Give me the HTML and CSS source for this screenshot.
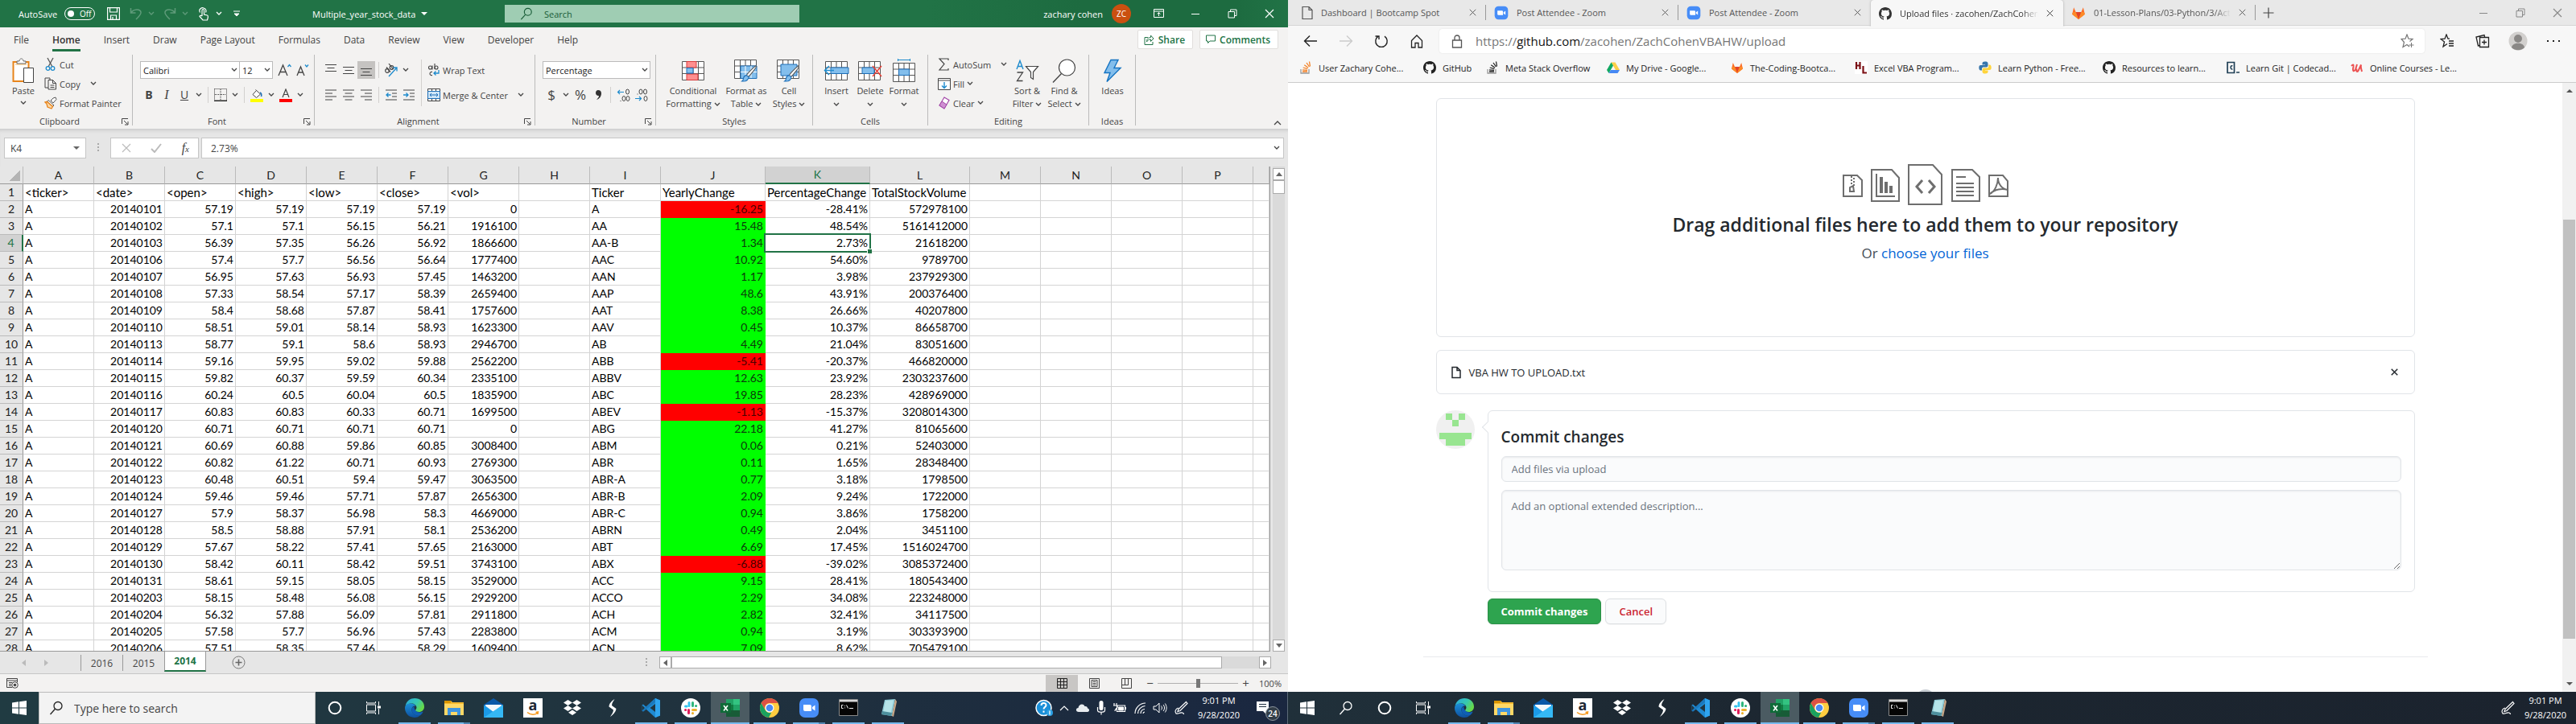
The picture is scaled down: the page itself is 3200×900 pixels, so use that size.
FILE: index.html
```html
<!DOCTYPE html>
<html lang="en">
<head>
<meta charset="utf-8">
<title>Multiple_year_stock_data</title>
<link rel="stylesheet" href="styles.css">
</head>
<body>
<svg class="sprite" aria-hidden="true">
  <symbol id="chev" viewBox="0 0 8 6"><path d="M1 1l3 3 3-3" fill="none" stroke="currentColor" stroke-width="1.3"/></symbol>
  <symbol id="search" viewBox="0 0 18 18"><circle cx="11" cy="6.5" r="5" fill="none" stroke="currentColor" stroke-width="1.3"/><path d="M7.5 10.3L1.5 17" fill="none" stroke="currentColor" stroke-width="1.3"/></symbol>
  <symbol id="close" viewBox="0 0 12 12"><path d="M1 1l10 10M11 1L1 11" fill="none" stroke="currentColor" stroke-width="1.2"/></symbol>
  <symbol id="restore" viewBox="0 0 12 12"><path d="M1 3.5h7.5V11H1zM3.5 3.500V1H11v7.500H8.500" fill="none" stroke="currentColor"/></symbol>
  <symbol id="minimize" viewBox="0 0 12 12"><path d="M1 6.500h10" stroke="currentColor"/></symbol>
  <symbol id="launcher" viewBox="0 0 9 9"><path d="M.5 7V.5H8M3 3l4.500 4.500M8 4v4H4" fill="none" stroke="currentColor"/></symbol>

  <symbol id="al-left" viewBox="0 0 14 14"><path d="M0 1h14M0 5h9M0 9h14M0 13h9" stroke="#444"/></symbol>
  <symbol id="al-center" viewBox="0 0 14 14"><path d="M0 1h14M2.500 5h9M0 9h14M2.500 13h9" stroke="#444"/></symbol>
  <symbol id="al-right" viewBox="0 0 14 14"><path d="M0 1h14M5 5h9M0 9h14M5 13h9" stroke="#444"/></symbol>
  <symbol id="al-top" viewBox="0 0 14 14"><path d="M0 .5h14M2.500 4.500h9M0 8.500h14" stroke="#444"/></symbol>
  <symbol id="al-mid" viewBox="0 0 14 14"><path d="M0 3.500h14M2.500 7.500h9M0 11.500h14" stroke="#444"/></symbol>
  <symbol id="al-bot" viewBox="0 0 14 14"><path d="M0 5.500h14M2.500 9.500h9M0 13.500h14" stroke="#444"/></symbol>
  <symbol id="grid-base" viewBox="0 0 28 24"><path d="M.5 .5h27v23H.5zM.5 8h27M.5 15.500h27M7.500.5v23M14 .5v23M20.500.5v23" fill="#fff" stroke="#555"/></symbol>
  <symbol id="brush" viewBox="0 0 20 20"><path d="M18.500 1c1 1-8 12-9.500 12.500L7 12C8 10 17.500 0 18.500 1z" fill="#fff" stroke="#555"/><path d="M7 12l2.500 2c-.5 4-4 5.500-8 5 2-1 1.500-2 2-4s2-3 3.500-3z" fill="#83beec" stroke="#1e6fb8"/></symbol>

  <symbol id="t-start" viewBox="0 0 20 20"><path d="M1 3.500l8-1.200v7.200H1zM10 2.200L19 1v8.500h-9zM1 10.500h8v7.200l-8-1.200zM10 10.500h9V19l-9-1.200z" fill="#fff"/></symbol>
  <symbol id="t-cortana" viewBox="0 0 20 20"><circle cx="10" cy="10" r="7.300" fill="none" stroke="#fff" stroke-width="2"/></symbol>
  <symbol id="t-view" viewBox="0 0 20 20"><path d="M1.500 6h11v8h-11zM1.500 2v2h11V2M1.500 18v-2h11v2M16.500 2v5M16.500 11v7" fill="none" stroke="#fff"/><path d="M15 7.500h4v3h-4z" fill="#fff"/></symbol>
  <symbol id="t-edge" viewBox="0 0 26 26"><defs><linearGradient id="ge1" x1="0" y1="0" x2="1" y2=".5"><stop offset="0" stop-color="#2aa8e0"/><stop offset=".6" stop-color="#36c8b0"/><stop offset="1" stop-color="#66d94a"/></linearGradient><linearGradient id="ge2" x1="0" y1="0" x2="0" y2="1"><stop offset="0" stop-color="#1c8fd8"/><stop offset="1" stop-color="#0d50a0"/></linearGradient></defs><path d="M1.500 11C2.500 5 7 1 13.200 1 20 1 25 5.500 25 11.500c0 4-3 6.500-6.500 6.500-2.500 0-4.500-1-4.500-2 0-.7 1.500-1.500 1.500-3.500 0-3-3-5-6.500-5-3.500 0-6.500 1.500-7.500 3.500z" fill="url(#ge1)"/><path d="M1 13c0-4 4-6 8-5.500 2.500.3 5 1.500 6 3.500-3-1.500-6 1-5.500 5 .6 4.500 5 7.500 10 6.500-2 1.800-4 2.500-6.500 2.500C6 25 1 19.500 1 13z" fill="url(#ge2)"/><path d="M9.500 16c-.2-2.500 1-4.500 3-5 -.5 4 3 8 8 7.500 1.200-.1 2.300-.6 3.200-1-1 2.500-2.500 4-4.200 5-5 1-9.500-2-10-6.500z" fill="#0f5fb5"/></symbol>
  <symbol id="t-explorer" viewBox="0 0 26 26"><path d="M1 4h8l2 2h14v16H1z" fill="#f5b92e"/><path d="M1 8h24v14H1z" fill="#ffd866"/><path d="M1 4h8v3H1z" fill="#d99500"/><path d="M5 13h16v9h-4v-4H9v4H5z" fill="#3f95e0"/></symbol>
  <symbol id="t-mail" viewBox="0 0 26 26"><path d="M1 9l12-8 12 8v4H1z" fill="#0a58a8"/><path d="M3 9h20v10H3z" fill="#f4f8fc"/><path d="M1 9l12 9 12-9v16H1z" fill="#1b9ae8"/><path d="M1 25l24-16v16z" fill="#35b8f5"/></symbol>
  <symbol id="t-amazon" viewBox="0 0 26 26"><path d="M1 1h24v24H1z" fill="#fff"/><path d="M6 18.500c4 3.500 10 3.500 13 .5M16.500 18.500l3-.5-.5 3" fill="none" stroke="#f79a1e" stroke-width="1.500"/></symbol>
  <symbol id="t-dropbox" viewBox="0 0 26 26"><path d="M7.500 3l5.500 3.500-5.500 3.500L2 6.500zM18.500 3L24 6.500 18.500 10 13 6.500zM7.500 10l5.500 3.500L7.500 17 2 13.500zM18.500 10l5.500 3.500-5.500 3.500-5.500-3.500zM13 15.500l5 3.200-5 3.300-5-3.300z" fill="#fff"/></symbol>
  <symbol id="t-bolt" viewBox="0 0 26 26"><path d="M16.500 2c-4 2.500-7 6-7 9.500l5.500 4c0 3-2.500 6-4 8.500 3.500-2.500 7-6 7.500-10l-5.500-4C13 7 15 4.500 16.500 2z" fill="#fff"/></symbol>
  <symbol id="t-code" viewBox="0 0 26 26"><path d="M18 1l6 2.500v19L18 25 6.500 14.500 3 17.500 1.500 16.500v-7L3 8.500l3.500 3z" fill="#1f8ad2"/><path d="M18 1L1.500 16.500 3 17.500 18 6z" fill="#1a78bd"/><path d="M18 1l6 2.500v19L18 25z" fill="#2fa4ef"/><path d="M18 8v10l-6.500-5z" fill="#213540"/><path d="M1.500 9.500v7L5 13z" fill="#213540"/></symbol>
  <symbol id="t-slack" viewBox="0 0 26 26"><circle cx="13" cy="13" r="12" fill="#fff"/><g stroke-width="3" stroke-linecap="round"><path d="M11 6.500v4M6.500 11H8" stroke="#36c5f0"/><path d="M15.500 6.500v4M19.500 10.500h.2" stroke="#2eb67d"/><path d="M15.500 15.500h4M15.500 19.500v.2" stroke="#ecb22e"/><path d="M10.500 15.500v4M6.500 15.500h.2" stroke="#e01e5a"/></g></symbol>
  <symbol id="t-excel" viewBox="0 0 26 26"><path d="M8 2h17v22H8z" fill="#21a366"/><path d="M17 2h8v7h-8z" fill="#33c481"/><path d="M8 9h9v7H8z" fill="#107c41"/><path d="M8 16h17v8H8z" fill="#185c37"/><path d="M1 7h13v12H1z" fill="#0f6b38"/><path d="M5 10l5 6.500M10 10l-5 6.500" stroke="#fff" stroke-width="1.600"/></symbol>
  <symbol id="t-chrome" viewBox="0 0 26 26"><circle cx="13" cy="13" r="12" fill="#ffcd40"/><path d="M2.600 7A12 12 0 0 1 23.400 7H13a6 6 0 0 0-5.200 9z" fill="#dd5144"/><path d="M2.600 7l5.200 9a6 6 0 0 0 7.500 2.500L12 25A12 12 0 0 1 2.600 7z" fill="#1aa15f"/><circle cx="13" cy="13" r="5.500" fill="#fff"/><circle cx="13" cy="13" r="4.300" fill="#4a8af4"/></symbol>
  <symbol id="t-zoom" viewBox="0 0 26 26"><rect x="1" y="1" width="24" height="24" rx="7" fill="#478df7"/><path d="M6 9h8a2 2 0 0 1 2 2v6H8a2 2 0 0 1-2-2zM17 12l3.500-2.500v7L17 14z" fill="#fff"/></symbol>
  <symbol id="t-cmd" viewBox="0 0 26 26"><path d="M1.500 2.500h23v20h-23z" fill="#050505" stroke="#8a8a8a"/><path d="M2 3h22v2.500H2z" fill="#d8d8d8"/><path d="M6.500 9.500h-2v4h2M8.500 10v.8M8.500 12.500v.8M10.500 9.500l2 4M14 13.500h5" stroke="#eee" fill="none"/></symbol>
  <symbol id="t-note" viewBox="0 0 26 26"><path d="M9 3l13-1-4 21-13-2z" fill="#8ecbd6"/><path d="M10 4l10-.8-3.500 17L7 19z" fill="#b5e3e8"/><path d="M22 2l2 3-4 19-2-1z" fill="#c9a888"/><path d="M6 17l12 2-.8 4L5 21z" fill="#4d8f9d"/></symbol>
  <symbol id="pen" viewBox="0 0 18 18"><path d="M15.500 1.500l1.500 2-9 9-3 1 1-3zM6 9C2 10 1 14 3 16c3 1 5-2 8-1 1 .3 1 1.500 2 1.500" fill="none" stroke="#fff" stroke-width="1.200"/></symbol>

  <symbol id="octocat" viewBox="0 0 16 16"><path fill="currentColor" d="M8 0C3.580 0 0 3.580 0 8c0 3.540 2.290 6.530 5.470 7.590.4.070.55-.17.55-.38 0-.19-.01-.82-.01-1.490-2.010.37-2.530-.49-2.690-.94-.09-.23-.48-.94-.82-1.130-.28-.15-.68-.52-.01-.53.63-.01 1.080.58 1.230.82.72 1.210 1.870.87 2.330.66.07-.52.28-.87.51-1.070-1.780-.2-3.640-.89-3.640-3.950 0-.87.31-1.590.82-2.150-.08-.2-.36-1.020.08-2.120 0 0 .67-.21 2.200.82.64-.18 1.320-.27 2-.27s1.360.09 2 .27c1.530-1.040 2.200-.82 2.200-.82.44 1.100.16 1.920.08 2.120.51.56.82 1.270.82 2.150 0 3.070-1.870 3.750-3.650 3.950.29.25.54.73.54 1.480 0 1.070-.01 1.930-.01 2.200 0 .21.15.46.55.38A8.010 8.010 0 0 0 16 8c0-4.420-3.580-8-8-8z"/></symbol>
  <symbol id="stack" viewBox="0 0 16 16"><path d="M2 10v5h10v-5" fill="none" stroke="#999" stroke-width="1.300"/><path d="M4 13h6M4 10.800l6 .6M4.700 8l5.600 1.700M6.300 4.800l4.800 3.500M9 2l3.500 5M12.500.5l1 6" stroke="currentColor" stroke-width="1.300"/></symbol>
  <symbol id="gitlab" viewBox="0 0 16 16"><path d="M8 15L1 9.500 2.800 2l2.200 5h6l2.200-5L15 9.500z" fill="#fc6d26"/><path d="M8 15L5 7h6z" fill="#e24329"/><path d="M8 15L1 9.500 2 7h3zM8 15l7-5.500L14 7h-3z" fill="#fc8a26"/></symbol>
  <symbol id="drive" viewBox="0 0 16 16"><path d="M5.500 1.500h5L16 11h-5z" fill="#ffcf48"/><path d="M5.500 1.500L0 11l2.500 4L8 5.500z" fill="#11a861"/><path d="M5 11h11l-2.500 4h-11z" fill="#4688f4"/></symbol>
  <symbol id="python" viewBox="0 0 16 16"><path d="M8 .5c-3 0-3.500 1-3.500 2.500v1.500H8V5H2.500C1 5 .3 6.300.3 8s.7 3.500 2.200 3.500H4V9.500C4 8 5 7.500 6.500 7.500h3C11 7.500 11.500 6.500 11.500 5V3C11.500 1 10 .5 8 .5z" fill="#3776ab"/><path d="M8 15.500c3 0 3.500-1 3.500-2.500v-1.500H8V11h5.500c1.500 0 2.200-1.300 2.200-3s-.7-3.500-2.200-3.500H12.300V6.500c0 1.500-.8 2-2.300 2H6.500C5 8.500 4.500 9.500 4.500 11v2c0 2 1.500 2.500 3.500 2.500z" fill="#ffd43b"/></symbol>
  <symbol id="page" viewBox="0 0 14 18"><path d="M1 1.500h8l4 4v11H1zM9 1.500v4h4" fill="none" stroke="currentColor" stroke-width="1.200"/></symbol>
  <symbol id="star" viewBox="0 0 18 18"><path d="M11 16l-3-2.500-5 3 1.500-6L1 6.500l5-.3L8 1l2 5.200 5 .3-3.500 3" fill="none" stroke="currentColor" stroke-width="1.200"/></symbol>
</svg>

<main class="desktop">
  <section class="monitor" aria-label="Spreadsheet monitor">
    <header class="xl-title">
      <div class="xl-quick">
        <span class="autosave">AutoSave</span>
        <button class="toggle" aria-label="AutoSave off"><i></i>Off</button>
        <button class="qbtn" aria-label="Save"><svg width="16" height="16" viewBox="0 0 16 16"><path d="M.6.600h14.800v14.800H.6zM3.500.600V6h9V.6M4.500 15.400V10h7v5.400M7 15.400V12" fill="none" stroke="#fff" stroke-width="1.200"/></svg></button>
        <button class="qbtn faded" aria-label="Undo"><svg width="16" height="16" viewBox="0 0 16 16"><path d="M1.500 1v6h6M1.500 7C5 2 13 1.500 14 6c.7 3-3 6-6 9" fill="none" stroke="currentColor" stroke-width="1.500"/></svg></button><svg class="chev faded"><use href="#chev"/></svg>
        <button class="qbtn faded" aria-label="Redo"><svg width="16" height="16" viewBox="0 0 16 16"><path d="M14.500 1v6h-6M14.500 7C11 2 3 1.500 2 6c-.7 3 3 6 6 9" fill="none" stroke="currentColor" stroke-width="1.500"/></svg></button><svg class="chev faded"><use href="#chev"/></svg>
        <button class="qbtn" aria-label="Touch mode"><svg width="14" height="17" viewBox="0 0 14 17"><path d="M5 11V4c0-2 2.500-2 2.500 0v5l4 1c1 .3 1 1.500.8 3L11.500 16H6L2 11.500c0-1.500 2-1.500 3-.5M2.500 6.500C0 2 5 0 7 1c3 1 3.500 3.500 2.500 5.500" fill="none" stroke="#fff" stroke-width="1.200"/></svg></button><svg class="chev"><use href="#chev"/></svg>
        <svg class="qat" viewBox="0 0 8 8"><path d="M0 1h8M1 4l3 3 3-3z" stroke="#fff" fill="#fff"/></svg>
      </div>
      <h1 class="xl-name">Multiple_year_stock_data <i class="tri"></i></h1>
      <label class="xl-search"><svg width="16" height="16"><use href="#search"/></svg><input type="text" placeholder="Search" aria-label="Search"></label>
      <div class="xl-user">
        <span>zachary cohen</span><b class="avatar">ZC</b>
        <button class="win" aria-label="Ribbon options"><svg width="13" height="12" viewBox="0 0 13 12"><path d="M.5.500h12v10H.5zM.5 3h12M6.500 9V5M4.500 6.500l2-2 2 2" fill="none" stroke="#fff"/></svg></button>
        <button class="win" aria-label="Minimize"><svg width="12" height="12"><use href="#minimize"/></svg></button>
        <button class="win" aria-label="Restore"><svg width="12" height="12"><use href="#restore"/></svg></button>
        <button class="win" aria-label="Close"><svg width="12" height="12"><use href="#close"/></svg></button>
      </div>
    </header>

    <nav class="xl-tabs">
      <a href="#file">File</a><a href="#home" class="on">Home</a><a href="#insert">Insert</a><a href="#draw">Draw</a><a href="#layout">Page Layout</a><a href="#formulas">Formulas</a><a href="#data">Data</a><a href="#review">Review</a><a href="#view">View</a><a href="#developer">Developer</a><a href="#help">Help</a>
      <div class="xl-share">
        <button><svg width="13" height="13" viewBox="0 0 13 13"><path d="M5 3.500H1v9h10V9M3.500 9c0-4 2-5.500 5-5.500V1L12 5 8.500 8.500V6c-2.500 0-4 1-5 3z" fill="none" stroke="#217346"/></svg>Share</button>
        <button><svg width="12" height="12" viewBox="0 0 12 12"><path d="M.5 1h11v7H5l-2.500 2.500V8h-2z" fill="none" stroke="#217346"/></svg>Comments</button>
      </div>
    </nav>

    <div class="ribbon">
      <section class="group g-clip">
        <div class="body">
          <button class="big paste"><svg width="28" height="32" viewBox="0 0 28 32"><path d="M1.500 5h19v24h-19z" fill="#fff" stroke="#e8841a" stroke-width="2"/><path d="M4 8h14" stroke="#fbd9a8" stroke-width="2"/><path d="M6 7V4h3c0-4 5-4 5 0h3v3z" fill="#fff" stroke="#666"/><path d="M14.500 12.500h12v18h-12z" fill="#fff" stroke="#444"/></svg><span>Paste</span><svg class="chev"><use href="#chev"/></svg></button>
          <div class="stack">
            <button class="line"><svg width="16" height="18" viewBox="0 0 16 18"><path d="M4 1l6 11M11 1L5 12" stroke="#555" stroke-width="1.300"/><circle cx="4.500" cy="14" r="2.300" fill="none" stroke="#1e8bcd" stroke-width="1.300"/><circle cx="10.500" cy="14" r="2.300" fill="none" stroke="#1e8bcd" stroke-width="1.300"/></svg>Cut</button>
            <button class="line"><svg width="16" height="16" viewBox="0 0 16 16"><path d="M5 13H1V1h6v2M5 3.500h5.500l4 4V15H5zM10.500 3.500v4h4M7.500 10h5M7.500 12.500h5" fill="none" stroke="#444"/></svg>Copy<svg class="chev wide"><use href="#chev"/></svg></button>
            <button class="line"><svg width="16" height="16" viewBox="0 0 16 16"><path d="M11 2l3-1 1 2.500-4 4.500-3-3z" fill="#fff" stroke="#555"/><path d="M5 4.500L12 11l-2 1.500L3.500 6z" fill="#fff" stroke="#555"/><path d="M3.500 6.500L1 7l2 2 1 4 5 2 1.500-2.500z" fill="#fbd9a8" stroke="#e8841a" stroke-width="1.300"/></svg>Format Painter</button>
          </div>
        </div>
        <h2>Clipboard</h2><svg class="launch"><use href="#launcher"/></svg>
      </section>

      <section class="group g-font">
        <div class="rows">
          <div class="row">
            <select class="combo c-font" aria-label="Font"><option>Calibri</option></select><select class="combo c-size" aria-label="Font size"><option>12</option></select>
            <button class="ib tall" aria-label="Increase font size"><svg width="18" height="18" viewBox="0 0 18 18"><path d="M1 16L6.500 3 12 16M3 11.500h7" fill="none" stroke="#444" stroke-width="1.300"/><path d="M12.500 5l2-2.500 2 2.500" fill="none" stroke="#1e8bcd" stroke-width="1.300"/></svg></button><button class="ib tall" aria-label="Decrease font size"><svg width="18" height="18" viewBox="0 0 18 18"><path d="M2 16L6.500 5 11 16M3.500 12h6" fill="none" stroke="#444" stroke-width="1.300"/><path d="M12 2.500l2 2.500 2-2.500" fill="none" stroke="#1e8bcd" stroke-width="1.300"/></svg></button>
          </div>
          <div class="row">
            <button class="ib"><b>B</b></button><button class="ib"><em>I</em></button><button class="ib"><u>U</u></button><svg class="chev pad"><use href="#chev"/></svg><i class="sep"></i>
            <button class="ib" aria-label="Borders"><svg width="16" height="16" viewBox="0 0 16 16"><path d="M.5.500h15v14M.5.500v14M8 1v14M1 7.500h14" fill="none" stroke="#333" stroke-dasharray="1 1"/><path d="M0 15.300h16" stroke="#222" stroke-width="1.500"/></svg></button><svg class="chev pad"><use href="#chev"/></svg><i class="sep"></i>
            <button class="ib" aria-label="Fill color"><svg width="16" height="17" viewBox="0 0 16 17"><path d="M6.500 1.500l6 5.500-5 4.500L3 7.500l4.500-5" fill="#fff" stroke="#444"/><path d="M12 5c2 1 2 3 1.500 5" fill="none" stroke="#1e6fb8" stroke-width="1.600"/><path d="M0 13h16v4H0z" fill="#ff0"/></svg></button><svg class="chev pad"><use href="#chev"/></svg>
            <button class="ib" aria-label="Font color"><svg width="16" height="17" viewBox="0 0 16 17"><path d="M4 11L8 1l4 10M5.300 7.500h5.400" fill="none" stroke="#444" stroke-width="1.200"/><path d="M0 13h16v4H0z" fill="red"/></svg></button><svg class="chev pad"><use href="#chev"/></svg>
          </div>
        </div>
        <h2>Font</h2><svg class="launch"><use href="#launcher"/></svg>
      </section>

      <section class="group g-align">
        <div class="body">
          <div class="rows">
            <div class="row"><button class="ib" aria-label="Top align"><svg width="14" height="14"><use href="#al-top"/></svg></button><button class="ib" aria-label="Middle align"><svg width="14" height="14"><use href="#al-mid"/></svg></button><button class="ib tall sel" aria-label="Bottom align"><svg width="14" height="14"><use href="#al-bot"/></svg></button><i class="sep"></i><button class="ib" aria-label="Orientation"><svg width="18" height="17" viewBox="0 0 18 17"><g fill="none" stroke="#444" stroke-width="1.200"><circle cx="4" cy="9" r="2.300"/><path d="M3 4.500l5 6"/><circle cx="9.500" cy="5" r="2.300"/><path d="M6 0l5 6.500"/></g><path d="M6 16L16 5M11.500 5h4.500v4.500" fill="none" stroke="#1e8bcd" stroke-width="1.300"/></svg></button><svg class="chev pad"><use href="#chev"/></svg></div>
            <div class="row"><button class="ib" aria-label="Align left"><svg width="14" height="14"><use href="#al-left"/></svg></button><button class="ib" aria-label="Center"><svg width="14" height="14"><use href="#al-center"/></svg></button><button class="ib" aria-label="Align right"><svg width="14" height="14"><use href="#al-right"/></svg></button><i class="sep"></i><button class="ib" aria-label="Decrease indent"><svg width="14" height="14" viewBox="0 0 14 14"><path d="M0 1h14M8 5h6M8 9h6M0 13h14" stroke="#444"/><path d="M6.500 7H1M3.500 4.500L1 7l2.500 2.500" fill="none" stroke="#1e8bcd" stroke-width="1.300"/></svg></button><button class="ib" aria-label="Increase indent"><svg width="14" height="14" viewBox="0 0 14 14"><path d="M0 1h14M8 5h6M8 9h6M0 13h14" stroke="#444"/><path d="M0 7h5.500M3.500 4.500L6 7 3.500 9.500" fill="none" stroke="#1e8bcd" stroke-width="1.300"/></svg></button></div>
          </div>
          <i class="sep long"></i>
          <div class="rows">
            <button class="line row"><svg width="16" height="16" viewBox="0 0 16 16"><g fill="none" stroke="#444" stroke-width="1.100"><circle cx="3.500" cy="5" r="2"/><path d="M6 2.500v5M9 0v7"/><circle cx="11" cy="5" r="2"/><path d="M6 10.500c-4-1-4 5 0 4"/></g><path d="M14 8v4H8M10.500 9.500L8 12l2.500 2.500" fill="none" stroke="#1e8bcd" stroke-width="1.300"/></svg>Wrap Text</button>
            <button class="line row"><svg width="16" height="16" viewBox="0 0 16 16"><path d="M.5.500h15v15H.5zM5.500.500v3M10.500.500v3M5.500 12.500v3M10.500 12.500v3" fill="#fff" stroke="#444"/><path d="M.5 3.500h15v9H.5z" fill="#cfe6f7" stroke="#1e6fb8"/><path d="M3 8h10M5 6L3 8l2 2M11 6l2 2-2 2" fill="none" stroke="#1e6fb8"/></svg>Merge &amp; Center<svg class="chev wide"><use href="#chev"/></svg></button>
          </div>
        </div>
        <h2>Alignment</h2><svg class="launch"><use href="#launcher"/></svg>
      </section>

      <section class="group g-num">
        <div class="rows">
          <div class="row"><select class="combo c-num" aria-label="Number format"><option>Percentage</option></select></div>
          <div class="row"><button class="ib glyph">$</button><svg class="chev pad"><use href="#chev"/></svg><button class="ib glyph">%</button><button class="ib" aria-label="Comma style"><svg width="9" height="14" viewBox="0 0 9 14"><path d="M4 1c2.500 0 4 1.500 4 4 0 4-2.500 7-6 8 2-2 3-3.500 3-5C3 8.500 1 7 1 4.500 1 2.500 2.300 1 4 1z" fill="#333"/></svg></button><i class="sep"></i><button class="ib" aria-label="Increase decimal"><svg width="17" height="17" viewBox="0 0 17 17"><path d="M9 4.500H1.500M4 2L1.500 4.500 4 7" fill="none" stroke="#1e8bcd" stroke-width="1.200"/><g fill="none" stroke="#444"><ellipse cx="13.500" cy="4" rx="2" ry="3"/><ellipse cx="9" cy="12.500" rx="2" ry="3"/><ellipse cx="14" cy="12.500" rx="2" ry="3"/><path d="M4.500 15.500h1"/></g></svg></button><button class="ib" aria-label="Decrease decimal"><svg width="17" height="17" viewBox="0 0 17 17"><path d="M1 12.500h7.500M6 10l2.500 2.500L6 15" fill="none" stroke="#1e8bcd" stroke-width="1.200"/><g fill="none" stroke="#444"><ellipse cx="8" cy="4" rx="2" ry="3"/><ellipse cx="13.500" cy="4" rx="2" ry="3"/><ellipse cx="14" cy="12.500" rx="2" ry="3"/><path d="M3.500 7h1"/></g></svg></button></div>
        </div>
        <h2>Number</h2><svg class="launch"><use href="#launcher"/></svg>
      </section>

      <section class="group g-style">
        <div class="body">
          <button class="big w72"><svg width="28" height="24" viewBox="0 0 28 24"><use href="#grid-base"/><path d="M6 .5h12v7.500H6zM6 16h14v7.500H6z" fill="#ff8f8f" stroke="#d83b3b"/><path d="M6 8.500h8V15H6z" fill="#83beec" stroke="#1e6fb8"/></svg><span>Conditional<br>Formatting <svg class="chev"><use href="#chev"/></svg></span></button>
          <button class="big w60"><svg width="30" height="28" viewBox="0 0 30 28"><use href="#grid-base" width="28" height="24"/><path d="M8 8h20v15.500H8z" fill="#83beec" stroke="#1e6fb8"/><path d="M14 8v15M21 8v15M8 15.500h20" stroke="#fff"/><use href="#brush" x="8" y="7" width="21" height="21"/></svg><span>Format as<br>Table <svg class="chev"><use href="#chev"/></svg></span></button>
          <button class="big w46"><svg width="30" height="28" viewBox="0 0 30 28"><use href="#grid-base" width="28" height="24"/><path d="M5 6h20v14H5z" fill="#83beec" stroke="#1e6fb8"/><use href="#brush" x="8" y="7" width="21" height="21"/></svg><span>Cell<br>Styles <svg class="chev"><use href="#chev"/></svg></span></button>
        </div>
        <h2>Styles</h2>
      </section>

      <section class="group g-cells">
        <div class="body">
          <button class="big w42"><svg width="32" height="24" viewBox="0 0 32 24"><use href="#grid-base" x="2" width="28" height="24"/><path d="M9 8h22v7.500H9z" fill="#83beec" stroke="#1e6fb8"/><path d="M13 11.500H1.500M7 6l-5.500 5.500L7 17" fill="none" stroke="#1e8bcd" stroke-width="1.500"/></svg><span>Insert<br><svg class="chev"><use href="#chev"/></svg></span></button>
          <button class="big w42"><svg width="30" height="24" viewBox="0 0 30 24"><use href="#grid-base" width="28" height="24"/><path d="M5 8h15v7.500H5z" fill="#83beec" stroke="#1e6fb8"/><path d="M18 6l11 13M29 6L18 19" stroke="#e8453c" stroke-width="1.600"/></svg><span>Delete<br><svg class="chev"><use href="#chev"/></svg></span></button>
          <button class="big w42"><svg width="28" height="30" viewBox="0 0 28 30"><use href="#grid-base" y="5" width="28" height="24"/><path d="M7.500 13h13v7.500h-13z" fill="#83beec" stroke="#1e6fb8"/><path d="M6.500 1.500h15M6.500 0v3M21.500 0v3" stroke="#1e8bcd"/></svg><span>Format<br><svg class="chev"><use href="#chev"/></svg></span></button>
        </div>
        <h2>Cells</h2>
      </section>

      <section class="group g-edit">
        <div class="body">
          <div class="stack">
            <button class="line"><svg width="16" height="16" viewBox="0 0 16 16"><path d="M13 3V1H2l6 6.500L2 15h11v-2" fill="none" stroke="#444" stroke-width="1.200"/></svg>AutoSum<svg class="chev wide"><use href="#chev"/></svg></button>
            <button class="line"><svg width="16" height="15" viewBox="0 0 16 15"><path d="M.5.500h15v14H.5zM.5 3h15" fill="#fff" stroke="#444"/><path d="M8 5v7.500M5 9.500l3 3 3-3" fill="none" stroke="#1e8bcd" stroke-width="1.400"/></svg>Fill<svg class="chev"><use href="#chev"/></svg></button>
            <button class="line"><svg width="16" height="16" viewBox="0 0 16 16"><path d="M8 1l6 3.500-6 10.500-6-4z" fill="#fff" stroke="#a347a8" stroke-width="1.200"/><path d="M5 6l6 4-3 5-6-4z" fill="#cf8fd2" stroke="#a347a8"/></svg>Clear<svg class="chev"><use href="#chev"/></svg></button>
          </div>
          <button class="big w46"><svg width="30" height="28" viewBox="0 0 30 28"><path d="M2 12L6 1.500 10 12M3.500 8.500h5" fill="none" stroke="#1e8bcd" stroke-width="1.400"/><path d="M2.500 16h7l-7 10.500h7" fill="none" stroke="#444" stroke-width="1.300"/><path d="M13.500 8.500h15l-6 7v9l-3-2v-7z" fill="#fff" stroke="#444" stroke-width="1.200"/></svg><span>Sort &amp;<br>Filter <svg class="chev"><use href="#chev"/></svg></span></button>
          <button class="big w46"><svg width="30" height="30" viewBox="0 0 30 30"><circle cx="18.500" cy="11" r="10" fill="#fff" stroke="#444" stroke-width="1.200"/><path d="M11.500 18.500L1 29.500" stroke="#444" stroke-width="1.400"/></svg><span>Find &amp;<br>Select <svg class="chev"><use href="#chev"/></svg></span></button>
        </div>
        <h2>Editing</h2>
      </section>

      <section class="group g-ideas">
        <div class="body"><button class="big w46"><svg width="24" height="29" viewBox="0 0 24 29"><path d="M10 1h9l-5 10h8L5 28l4-11H2z" fill="#83beec" stroke="#1473c2" stroke-width="1.400"/></svg><span>Ideas</span></button></div>
        <h2>Ideas</h2>
      </section>
      <svg class="collapse" viewBox="0 0 10 7"><path d="M1 6l4-4 4 4" fill="none" stroke="#444" stroke-width="1.300"/></svg>
    </div>

    <div class="formula">
      <label class="namebox"><input type="text" value="K4" aria-label="Name box"><i class="tri"></i></label>
      <i class="dots"></i>
      <div class="fx"><svg width="12" height="12"><use href="#close"/></svg><svg width="14" height="12" viewBox="0 0 14 12"><path d="M1 7l4 4L13 1" fill="none" stroke="#bbb" stroke-width="2"/></svg><em>f<small>x</small></em></div>
      <label class="fbar"><input type="text" value="2.73%" aria-label="Formula bar"><svg class="chev"><use href="#chev"/></svg></label>
    </div>

    <div class="sheet">
      <div class="sheet-view">
        <table class="grid" id="grid">
          <colgroup><col class="c-head"><col span="9" class="c-std"><col span="2" class="c-wide"><col class="c-vol"><col span="4" class="c-std"><col></colgroup>
          <thead></thead><tbody></tbody>
        </table>
      </div>
      <div class="vscroll"><button class="up" aria-label="Scroll up"></button><i class="thumb"></i><button class="down" aria-label="Scroll down"></button></div>
    </div>

    <div class="sheet-tabs">
      <button class="arrow l" aria-label="Previous sheet"></button><button class="arrow r" aria-label="Next sheet"></button>
      <div class="tabset"><button>2016</button><button>2015</button><button class="on">2014</button></div>
      <button class="add" aria-label="New sheet"><svg width="17" height="17" viewBox="0 0 17 17"><circle cx="8.500" cy="8.500" r="7.500" fill="none" stroke="#777"/><path d="M8.500 4.500v8M4.500 8.500h8" stroke="#666" stroke-width="1.600"/></svg></button>
      <div class="hscroll"><i class="dots"></i><button class="left" aria-label="Scroll left"></button><i class="bar"></i><i class="track"></i><button class="right" aria-label="Scroll right"></button></div>
    </div>

    <footer class="status">
      <svg width="15" height="13" viewBox="0 0 15 13"><path d="M7 11.500H.5V.5h13V5M.5 3h13M3 5.500h4M3 7.500h3M3 9.500h3" fill="none" stroke="#444"/><circle cx="10.500" cy="8.500" r="3.800" fill="none" stroke="#444"/><circle cx="10.500" cy="8.500" r="1.800" fill="#444"/></svg>
      <div class="views">
        <button class="on" aria-label="Normal view"><svg width="13" height="13" viewBox="0 0 13 13"><path d="M.5.500h12v12H.5zM.5 4.500h12M.5 8.500h12M4.500.500v12M8.500.500v12" fill="none" stroke="#222"/></svg></button>
        <button aria-label="Page layout view"><svg width="13" height="13" viewBox="0 0 13 13"><path d="M.5.500h12v12H.5zM3 2.500h7v8H3zM4.500 4.500h4M4.500 6.500h4M4.500 8.500h4" fill="none" stroke="#444"/></svg></button>
        <button aria-label="Page break view"><svg width="13" height="13" viewBox="0 0 13 13"><path d="M.5.500h12v12H.5zM4.500.500v8M8.500.500v8h-8" fill="none" stroke="#444"/></svg></button>
        <span class="pm">−</span><i class="slider"></i><span class="pm">+</span><span class="pct">100%</span>
      </div>
    </footer>

    <div class="taskbar bar-a">
      <button class="sys" aria-label="Start"><svg width="20" height="20"><use href="#t-start"/></svg></button>
      <label class="tsearch"><svg width="18" height="18"><use href="#search"/></svg><input type="text" placeholder="Type here to search" aria-label="Type here to search"></label>
      <button class="sys" aria-label="Cortana"><svg width="20" height="20"><use href="#t-cortana"/></svg></button>
      <button class="sys" aria-label="Task view"><svg width="20" height="20"><use href="#t-view"/></svg></button>
      <div class="apps"></div>
      <div class="tray">
        <svg width="22" height="22" viewBox="0 0 22 22"><circle cx="10.500" cy="11" r="9.500" fill="#1a8fd8" stroke="#fff" stroke-width="1.500"/><path d="M7.500 8c0-4 6-4 6-.5 0 2.500-3 2.500-3 5M10.500 14.500v2.200" fill="none" stroke="#fff" stroke-width="2"/><circle cx="18" cy="17" r="4" fill="#2ba0e4"/><path d="M18 14.500v5" stroke="#fff" stroke-width="1.300"/></svg>
        <svg width="12" height="8" viewBox="0 0 12 8"><path d="M1 7l5-5 5 5" fill="none" stroke="#fff" stroke-width="1.200"/></svg>
        <svg width="18" height="12" viewBox="0 0 18 12"><path d="M4 11c-4 0-4-5-.5-5C4 1 10 0 11.500 4c3-.5 3.500 1.500 3.500 2.500 3 .5 2.500 4.500 0 4.500z" fill="#e8ecef"/></svg>
        <svg width="12" height="18" viewBox="0 0 12 18"><rect x="3.500" width="5" height="12" rx="2.500" fill="#fff"/><path d="M1.500 8v4c0 3 9 3 9 0V8M6 14v3.500" fill="none" stroke="#fff" stroke-width="1.200"/></svg>
        <svg width="18" height="14" viewBox="0 0 18 14"><path d="M5.500 4h10v7.500h-10zM2 1v3M5 1v3M1 4h5v2.500c-1 1.500-3 2-3 4.500" fill="none" stroke="#fff" stroke-width="1.200"/><path d="M7.500 6h6v4h-6zM16.500 6v3" fill="#fff" stroke="#fff"/></svg>
        <svg width="16" height="16" viewBox="0 0 16 16"><path d="M2 15C2 8 8 2 15 2M5.500 15c0-5 4-9 9-9.500M9 15c0-3 2-5 5-5.500M12 15c0-1 .7-1.800 2-2" fill="none" stroke="#fff" stroke-width="1.200"/></svg>
        <svg width="18" height="14" viewBox="0 0 18 14"><path d="M1 5h3l4-4v12L4 9H1zM10.500 4.500c1.200 1.500 1.200 3.500 0 5M13 3c2 2.500 2 5.500 0 8M15.300 1.500c2.400 3.500 2.400 7.500 0 11" fill="none" stroke="#fff"/></svg>
        <svg width="18" height="18"><use href="#pen"/></svg>
      </div>
      <div class="clock"><span>9:01 PM</span><span>9/28/2020</span></div>
      <button class="notif" aria-label="Notifications"><svg width="18" height="18" viewBox="0 0 18 18"><path d="M1 1h15v12h-3v4l-4-4H1z" fill="#fff"/><path d="M4 4.500h9M4 7.500h9" stroke="#213040"/></svg><b>24</b></button>
    </div>
  </section>

  <section class="monitor" aria-label="Browser monitor">
    <header class="tabstrip">
      <div class="btab"><svg width="14" height="18"><use href="#page"/></svg><span>Dashboard | Bootcamp Spot</span><button aria-label="Close tab"><svg width="9" height="9"><use href="#close"/></svg></button></div>
      <div class="btab"><svg width="18" height="18"><use href="#t-zoom"/></svg><span>Post Attendee - Zoom</span><button aria-label="Close tab"><svg width="9" height="9"><use href="#close"/></svg></button></div>
      <div class="btab"><svg width="18" height="18"><use href="#t-zoom"/></svg><span>Post Attendee - Zoom</span><button aria-label="Close tab"><svg width="9" height="9"><use href="#close"/></svg></button></div>
      <div class="btab on"><svg width="16" height="16"><use href="#octocat"/></svg><span>Upload files · zacohen/ZachCohenVBAHW</span><button aria-label="Close tab"><svg width="9" height="9"><use href="#close"/></svg></button></div>
      <div class="btab"><svg width="18" height="18"><use href="#gitlab"/></svg><span>01-Lesson-Plans/03-Python/3/Activities</span><button aria-label="Close tab"><svg width="9" height="9"><use href="#close"/></svg></button></div>
      <button class="newtab" aria-label="New tab"><svg width="14" height="14" viewBox="0 0 14 14"><path d="M7 .5v13M.5 7h13" stroke="#444" stroke-width="1.200"/></svg></button>
      <div class="bwin"><button class="win" aria-label="Minimize"><svg width="12" height="12"><use href="#minimize"/></svg></button><button class="win" aria-label="Restore"><svg width="12" height="12"><use href="#restore"/></svg></button><button class="win" aria-label="Close"><svg width="12" height="12"><use href="#close"/></svg></button></div>
    </header>

    <div class="toolbar">
      <button aria-label="Back"><svg width="18" height="16" viewBox="0 0 18 16"><path d="M17 8H1.500M8 1.500L1.500 8 8 14.500" fill="none" stroke="#222" stroke-width="1.400"/></svg></button>
      <button aria-label="Forward"><svg width="18" height="16" viewBox="0 0 18 16"><path d="M1 8h15.500M10 1.500L16.500 8 10 14.500" fill="none" stroke="#ccc" stroke-width="1.400"/></svg></button>
      <button aria-label="Reload"><svg width="18" height="18" viewBox="0 0 18 18"><path d="M13 3.200A7.200 7.200 0 1 1 5 3.200M1.500 3H6v4" fill="none" stroke="#222" stroke-width="1.400"/></svg></button>
      <button aria-label="Home"><svg width="16" height="17" viewBox="0 0 16 17"><path d="M1.500 7.500L8 1l6.500 6.500V16H10v-5.500H6V16H1.500z" fill="none" stroke="#222" stroke-width="1.300"/></svg></button>
      <div class="address"><svg width="14" height="17" viewBox="0 0 14 17"><path d="M1.500 7h11v9h-11zM4 7V4c0-4 6-4 6 0v3" fill="none" stroke="#555" stroke-width="1.300"/></svg><span>https://<b>github.com</b>/zacohen/ZachCohenVBAHW/upload</span><button aria-label="Add to favorites"><svg width="18" height="18" viewBox="0 0 18 18"><use href="#star"/><path d="M13.500 11v6M10.500 14h6" stroke="currentColor"/></svg></button></div>
      <button aria-label="Favorites"><svg width="18" height="18" viewBox="0 0 18 18"><path d="M9 12.500l-5 3.500 1.500-6L1 6.500l5-.3L8 1l2 5.200h2M11 9h6M11 12h6M11 15h6" fill="none" stroke="#222" stroke-width="1.300"/></svg></button>
      <button aria-label="Collections"><svg width="18" height="18" viewBox="0 0 18 18"><path d="M5.500 4.500h11v12h-11zM5.500 14L3.500 15 1 4l10-2.500.7 3M11 7.500v6M8 10.500h6" fill="none" stroke="#222" stroke-width="1.300"/></svg></button>
      <button aria-label="Profile"><svg width="24" height="24" viewBox="0 0 24 24"><circle cx="12" cy="12" r="11.500" fill="#d2d0ce"/><circle cx="12" cy="9" r="5" fill="#8a8886"/><path d="M4 20c1-7 15-7 16 0a11.500 11.500 0 0 1-16 0z" fill="#8a8886"/></svg></button>
      <button aria-label="Menu"><svg width="16" height="4" viewBox="0 0 16 4"><path d="M0 1h2v2H0zM7 1h2v2H7zM14 1h2v2h-2z" fill="#222"/></svg></button>
    </div>

    <nav class="bookmarks">
      <a href="#so" class="orange"><svg><use href="#stack"/></svg>User Zachary Cohe...</a>
      <a href="#gh" class="short"><svg><use href="#octocat"/></svg>GitHub</a>
      <a href="#meta" class="mid"><svg><use href="#stack"/></svg>Meta Stack Overflow</a>
      <a href="#gdrive"><svg><use href="#drive"/></svg>My Drive - Google...</a>
      <a href="#gl"><svg><use href="#gitlab"/></svg>The-Coding-Bootca...</a>
      <a href="#vba"><svg viewBox="0 0 16 16"><path d="M0 0h16v16H0z" fill="#fff"/><path d="M2 1v9M6.500 1v9M2 5.500h4.500M10.500 6v8.500H15" fill="none" stroke="#7b0f14" stroke-width="2.200"/></svg>Excel VBA Program...</a>
      <a href="#py"><svg><use href="#python"/></svg>Learn Python - Free...</a>
      <a href="#res"><svg><use href="#octocat"/></svg>Resources to learn...</a>
      <a href="#cc"><svg viewBox="0 0 16 16"><path d="M1 1.500h8.500v13H1zM12 14h4" fill="none" stroke="#204056" stroke-width="1.700"/><path d="M7.300 6c-3-1.500-3 5 0 3.800" fill="none" stroke="#204056" stroke-width="1.500"/></svg>Learn Git | Codecad...</a>
      <a href="#ud"><svg viewBox="0 0 16 16"><path d="M1 6c2-2.500 3-2 2.500 1C2 12.500 4 13.500 6 10.500l2-6.500M7.500 9.500c-.8 4 1 4.500 2.500 1.500l3-6.500c-1 4 .5 5 1 8.500" fill="none" stroke="#ec5252" stroke-width="2"/></svg>Online Courses - Le...</a>
    </nav>

    <div class="viewport">
      <div class="page">
        <div class="drop">
          <svg width="206" height="54" viewBox="0 0 206 54" fill="none" stroke="#6e6e6e" stroke-width="2">
            <path d="M1 15h17l6 6v20H1zM11 16v2M14 18v2M11 20v2M14 22v2M11 24v2M14 26v2M9 35v-5l4-2 1 7z"/>
            <path d="M36 8h25l9 10v29H36zM42 13v28h23"/><path d="M48 17v20M54 23v14M60 28v9" stroke-width="4"/>
            <path d="M82 2h30l11 12v37H82z"/><path d="M99 21l-7 8 7 8M107 21l7 8-7 8" stroke-width="3"/>
            <path d="M136 8h25l9 9v30h-34zM141 17h12M141 25h22M141 30h22M141 35h22M141 40h22"/>
            <path d="M182 15h17l6 7v19h-23zM183 38c6-3 10-12 10-20 0 8 5 14 12 15-7-2-16-1-22 5z"/>
          </svg>
          <h2>Drag additional files here to add them to your repository</h2>
          <p>Or <a href="#choose">choose your files</a></p>
        </div>
        <div class="filebox"><svg width="12" height="16" viewBox="0 0 12 16"><path d="M1 1.500h6l4 4v9H1zM7 1.500v4h4" fill="none" stroke="#24292e" stroke-width="1.500"/></svg><span>VBA HW TO UPLOAD.txt</span><button aria-label="Remove file"><svg width="9" height="9" viewBox="0 0 12 12"><path d="M1 1l10 10M11 1L1 11" stroke="#24292e" stroke-width="2"/></svg></button></div>
        <form class="commit">
          <svg class="ident" width="48" height="48" viewBox="0 0 48 48"><circle cx="24" cy="24" r="24" fill="#f0f0f0"/><path d="M12 4h8v8h8V4h8v8h-8v8h-8v-8h-8zM4 28h40v8h-8v8H12v-8H4z" fill="#98e590"/></svg>
          <div class="cbody">
            <div class="cbox">
              <h3>Commit changes</h3>
              <input type="text" placeholder="Add files via upload" aria-label="Commit summary">
              <textarea placeholder="Add an optional extended description..." aria-label="Extended description"></textarea>
            </div>
            <div class="actions"><button type="button" class="primary">Commit changes</button><button type="button" class="danger">Cancel</button></div>
          </div>
        </form>
        <div class="pagefoot"><svg width="24" height="24"><use href="#octocat"/></svg></div>
      </div>
      <div class="pscroll"><i class="pup"></i><i class="pthumb"></i><i class="pdown"></i></div>
    </div>

    <div class="taskbar bar-b">
      <button class="sys" aria-label="Start"><svg width="20" height="20"><use href="#t-start"/></svg></button>
      <button class="sys white" aria-label="Search"><svg width="18" height="18"><use href="#search"/></svg></button>
      <button class="sys" aria-label="Cortana"><svg width="20" height="20"><use href="#t-cortana"/></svg></button>
      <button class="sys" aria-label="Task view"><svg width="20" height="20"><use href="#t-view"/></svg></button>
      <div class="apps"></div>
      <div class="tray"><svg width="18" height="18"><use href="#pen"/></svg></div>
      <div class="clock"><span>9:01 PM</span><span>9/28/2020</span></div>
    </div>
  </section>
</main>
<script src="app.js"></script>
</body>
</html>
```
FILE: styles.css
```css
* { box-sizing: border-box; }
body { margin: 0; font-family: "Open Sans", "Noto Sans", sans-serif; font-size: 11px; color: #444; }
button, input, select, textarea { font: inherit; color: inherit; margin: 0; padding: 0; border: 0; background: none; border-radius: 0; }
input:focus, textarea:focus { outline: none; }
h1, h2, h3, p { margin: 0; font-weight: 400; font-size: inherit; }
a { color: inherit; text-decoration: none; }
svg { flex: none; display: block; }
.sprite { position: absolute; width: 0; height: 0; }
.desktop { display: flex; height: 100vh; overflow: hidden; }
.monitor { flex: 1 1 0; min-width: 0; display: flex; flex-direction: column; background: #fff; }
.chev { width: 8px; height: 6px; color: #444; display: inline-block; }
.tri { display: inline-block; border: 4px solid transparent; border-top-color: currentColor; border-bottom: 0; }
.win { width: 46px; display: grid; place-items: center; }

/* spreadsheet title bar */
.xl-title { height: 34px; display: grid; grid-template-columns: 388px 239px 366px 1fr; align-items: center; background: linear-gradient(90deg, #217346 72%, #1d6b40 84%, #1d6b40 96%, #217346); color: #fff; }
.xl-quick { display: flex; align-items: center; padding-left: 23px; }
.autosave { width: 57px; }
.toggle { width: 38px; height: 16px; border: 1px solid #fff; border-radius: 8px; display: flex; align-items: center; gap: 7px; padding-left: 3px; font-size: 10px; line-height: 14px; }
.toggle i { width: 8px; height: 8px; border-radius: 50%; background: #fff; }
.qbtn { width: 18px; display: grid; place-items: center; margin-left: 14px; }
.xl-quick .chev { color: #fff; margin-left: 6px; }
.xl-quick .chev.faded, .faded { color: #5f9b7a; }
.qbtn + .qbtn { margin-left: 10px; }
.chev + .qbtn { margin-left: 10px; }
.qat { width: 8px; height: 8px; margin-left: 14px; }
.xl-name { display: flex; align-items: center; gap: 7px; white-space: nowrap; }
.xl-search { display: flex; align-items: center; gap: 14px; height: 22px; padding-left: 19px; background: #9fcdb3; color: #185c37; }
.xl-search input { flex: 1; min-width: 0; }
.xl-search input::placeholder { color: #185c37; opacity: 1; }
.xl-user { display: flex; align-items: center; justify-content: flex-end; height: 34px; }
.xl-user .win { height: 34px; }
.avatar { width: 24px; height: 24px; border-radius: 50%; background: #ca5010; margin: 0 11px; display: grid; place-items: center; font-size: 10px; font-weight: 400; }

/* ribbon */
.xl-tabs { height: 32px; display: flex; align-items: center; gap: 29px; padding-left: 17px; background: #f3f2f1; font-size: 12px; }
.xl-tabs a { height: 28px; line-height: 28px; white-space: nowrap; }
.xl-tabs .on { font-weight: 600; color: #333; border-bottom: 3px solid #217346; }
.xl-share { margin-left: auto; display: flex; gap: 8px; padding-right: 12px; align-self: flex-start; padding-top: 3px; }
.xl-share button { height: 24px; padding: 0 9px 0 7px; display: flex; align-items: center; gap: 5px; background: #fff; border: 1px solid #e1dfdd; border-radius: 2px; color: #217346; font-weight: 600; }
.ribbon { height: 94px; display: flex; padding: 2px 0 4px; background: #f3f2f1; position: relative; }
.group { position: relative; border-right: 1px solid #bbb; display: flex; flex-direction: column; justify-content: space-between; }
.group h2 { text-align: center; line-height: 15px; font-size: 11px; padding-right: 16px; margin-bottom: -2px; }
.g-style h2, .g-cells h2, .g-edit h2, .g-ideas h2 { padding-right: 0; }
.launch { position: absolute; right: 4px; bottom: 0; width: 9px; height: 9px; }
.g-clip { width: 165px; } .g-font { width: 226px; } .g-align { width: 274px; } .g-num { width: 150px; }
.g-style { width: 195px; } .g-cells { width: 143px; } .g-edit { width: 200px; } .g-ideas { width: 58px; }
.body { display: flex; }
.group > .rows, .g-align .rows:first-child { padding-left: 9px; }
.rows { padding-top: 8px; display: flex; flex-direction: column; gap: 9px; }
.row { display: flex; align-items: center; height: 22px; }
.combo { height: 22px; border: 1px solid #bbb; background: #fff url("data:image/svg+xml,%3Csvg xmlns='http://www.w3.org/2000/svg' width='8' height='6'%3E%3Cpath d='M1 1l3 3 3-3' fill='none' stroke='%23444' stroke-width='1.3'/%3E%3C/svg%3E") no-repeat right 2px center; appearance: none; padding: 0 3px; color: #222; }
.c-font { width: 124px; } .c-size { width: 42px; margin: 0 4px 0 -1px; } .c-num { width: 134px; }
.ib { width: 22px; height: 20px; display: grid; place-items: center; font-size: 14px; line-height: 18px; }
.ib.tall { height: 22px; }
.ib.sel { background: #c5c3c1; }
.ib em { font-family: "Liberation Serif", serif; font-size: 16px; }
.ib.glyph { font-size: 17px; }
.chev.pad { margin: 0 3px; }
.sep { width: 1px; height: 20px; background: #d2d0ce; margin: 0 4px; }
.sep.long { height: 58px; margin: 6px 4px 0; }
.line { display: flex; align-items: center; gap: 3px; white-space: nowrap; height: 24px; }
.line > svg:first-child { margin-left: 3px; }
.line.row { height: 22px; }
.chev.wide { margin-left: 9px; }
.stack { display: flex; flex-direction: column; }
.g-clip .body { padding-left: 9px; }
.g-clip .stack { margin-left: 3px; }
.big { display: flex; flex-direction: column; align-items: center; line-height: 16px; white-space: nowrap; }
.big > svg:first-child { height: 32px; margin: 4px 0 1px; }
.big.paste { width: 40px; }
.big.paste .chev { margin-top: 4px; }
.g-style .body { padding-left: 10px; } .g-cells .body { padding-left: 8px; } .g-edit .body { padding-left: 7px; } .g-ideas .body { padding-left: 6px; }
.g-edit .stack { width: 91px; margin-left: 2px; }
.w72 { width: 72px; } .w60 { width: 60px; } .w46 { width: 46px; } .w42 { width: 42px; }
.collapse { width: 10px; height: 7px; margin: auto 8px 0 auto; }

/* formula bar */
.formula { height: 47px; padding: 11px 5px 10px; display: flex; align-items: stretch; background: #e6e6e6; box-shadow: inset 0 5px 4px -3px #c9c9c9; font-size: 12px; }
.formula label, .fx { background: #fff; border: 1px solid #c6c6c6; display: flex; align-items: center; }
.namebox { width: 102px; padding: 0 7px; color: #666; }
.namebox input { flex: 1; min-width: 0; color: #444; }
.dots { width: 2px; height: 12px; align-self: center; background: repeating-linear-gradient(#aaa 0 2px, transparent 2px 4px); }
.formula .dots { margin: 0 14px; }
.fx { width: 110px; justify-content: space-between; padding: 0 11px 0 13px; color: #bbb; }
.fx em { font: italic 16px "Liberation Serif", serif; color: #444; }
.fx small { font-size: 11px; }
.fbar { flex: 1; margin-left: 3px; padding: 0 4px 0 11px; }
.fbar input { flex: 1; }

/* grid */
.sheet { flex: 1; min-height: 0; display: flex; background: #e6e6e6; }
.sheet-view { flex: 1; min-width: 0; overflow: hidden; border-bottom: 1px solid #999; border-right: 1px solid #999; }
.grid { table-layout: fixed; width: 100%; border-collapse: separate; border-spacing: 0; background: #fff; font-family: Lato, sans-serif; font-size: 14px; line-height: 20px; color: #000; }
.c-head { width: 29px; } .c-std { width: 88px; } .c-wide { width: 130px; } .c-vol { width: 124px; }
.grid th, .grid td { padding: 0 2px; height: 21px; border-right: 1px solid #d4d4d4; border-bottom: 1px solid #d4d4d4; white-space: nowrap; font-weight: 400; overflow: hidden; }
.grid th { background: #e6e6e6; color: #222; border-color: #bbb; padding: 0; }
.grid thead th { border-bottom-color: #999; }
.grid thead th:first-child { background: linear-gradient(135deg, transparent 50%, #b4b4b4 50%) right 3px bottom 3px / 13px 13px no-repeat #e6e6e6; }
.grid tbody th { border-right-color: #999; }
.grid th.cur { background: #d2d2d2; color: #217346; }
.grid thead th.cur { border-bottom: 2px solid #217346; }
.grid tbody th.cur { border-right: 2px solid #217346; }
.grid .names td { font-size: 15px; }
.num { text-align: right; }
.grid .gain { background: #0f0; border-color: #0f0; color: #0b3a0b; }
.grid .loss { background: red; border-color: red; color: #4a0000; }
.grid td.active { position: relative; overflow: visible; }
.active::before { content: ""; position: absolute; inset: -2px; border: 2px solid #217346; }
.active::after { content: ""; position: absolute; right: -3px; bottom: -3px; width: 5px; height: 5px; background: #217346; border: solid #fff; border-width: 1px 0 0 1px; }
.vscroll { width: 22px; padding: 2px 4px 0 3px; display: flex; flex-direction: column; background: linear-gradient(#dadada, #dadada) 3px 0 / 15px 100% no-repeat; }
.vscroll button, .hscroll button { width: 15px; height: 15px; background: #fff; border: 1px solid #ababab; display: grid; place-items: center; }
.vscroll button::after, .hscroll button::after { content: ""; border: 4px solid transparent; }
.vscroll .up::after { border-bottom: 5px solid #666; border-top: 0; }
.vscroll .down::after { border-top: 5px solid #666; border-bottom: 0; }
.hscroll .left::after { border-right: 5px solid #666; border-left: 0; }
.hscroll .right::after { border-left: 5px solid #666; border-right: 0; }
.thumb { height: 17px; background: #fff; border: 1px solid #ababab; }
.vscroll .down { margin-top: auto; }

/* sheet tabs and status */
.sheet-tabs { height: 28px; display: flex; background: #e6e6e6; border-bottom: 1px solid #c6c6c6; font-size: 12px; padding-left: 15px; }
.arrow { width: 28px; display: grid; place-items: center; }
.arrow::after { content: ""; border: 4px solid transparent; }
.arrow.l::after { border-right: 5px solid #bbb; border-left: 0; }
.arrow.r::after { border-left: 5px solid #bbb; border-right: 0; }
.tabset { display: flex; margin-left: 29px; }
.tabset button { width: 52px; height: 20px; margin-top: 4px; border-left: 1px solid #999; }
.tabset .on { height: 25px; margin-top: 0; background: #fff; color: #217346; font-weight: 700; border-right: 1px solid #999; border-bottom: 2px solid #217346; }
.add { margin-left: 32px; display: grid; place-items: center; }
.hscroll { flex: 0 1 798px; margin-left: auto; display: flex; align-items: center; padding-right: 21px; }
.hscroll .dots { margin-right: 15px; }
.bar { flex: 1; height: 15px; background: #fff; border: 1px solid #ababab; }
.track { width: 46px; height: 15px; background: #dadada; }
.status { height: 22px; display: flex; align-items: center; justify-content: space-between; padding: 0 8px; background: #f3f2f1; }
.views { display: flex; align-items: center; }
.views button { width: 40px; height: 21px; display: grid; place-items: center; }
.views .on { background: #c8c6c4; }
.pm { width: 19px; text-align: center; font-size: 15px; line-height: 20px; }
.slider { width: 100px; height: 11px; background: linear-gradient(#777, #777) center / 5px 100% no-repeat, linear-gradient(#b0b0b0, #b0b0b0) center / 100% 1px no-repeat; }
.pct { margin-left: 7px; }

/* taskbar */
.taskbar { height: 40px; flex: none; display: flex; align-items: stretch; color: #fff; }
.bar-a { background: linear-gradient(90deg, #203b42, #20323e 55%, #1a2740); }
.bar-b { background: linear-gradient(90deg, #20303a, #1c2630 40%, #1b232e); }
.sys { width: 48px; display: grid; place-items: center; }
.white { color: #fff; }
.tsearch { width: 344px; display: flex; align-items: center; gap: 13px; padding-left: 12px; background: #f3f3f3; border: 1px solid #bbb; color: #222; font-size: 14px; }
.tsearch input { flex: 1; min-width: 0; }
.tsearch input::placeholder { color: #444; opacity: 1; }
.apps { display: flex; gap: 1px; margin-left: 3px; }
.app { width: 48px; display: grid; place-items: center; position: relative; }
.app svg, .app span { grid-area: 1 / 1; }
.app svg { width: 26px; height: 26px; }
.app span { color: #1c2733; font-size: 18px; font-weight: 700; line-height: 20px; padding-bottom: 8px; z-index: 1; }
.app.run::after { content: ""; position: absolute; left: 4px; right: 4px; bottom: 0; height: 2px; background: #76b9ed; }
.app.multi::after { background: linear-gradient(90deg, #76b9ed 32px, #4f84b0 32px); }
.app.focus { background: #4b5b62; }
.app.focus::after { left: 0; right: 0; }
.tray { margin-left: auto; display: flex; align-items: center; gap: 8px; }
.clock { width: 76px; display: flex; flex-direction: column; justify-content: center; text-align: center; line-height: 18px; }
.notif { width: 48px; position: relative; display: grid; place-items: center; border-right: 1px solid #5d6b78; padding-right: 13px; }
.notif b { position: absolute; right: 9px; bottom: 4px; width: 18px; height: 18px; border-radius: 50%; background: #333e48; border: 1px solid #8b959e; font: 600 10px/16px "Open Sans", sans-serif; }

/* browser chrome */
.tabstrip { height: 32px; display: flex; padding-left: 7px; background: #e8e8e8; border-bottom: 1px solid #d5d5d5; color: #555; }
.btab { width: 239px; padding: 0 12px 0 10px; display: flex; align-items: center; gap: 10px; position: relative; }
.btab span { flex: 1; min-width: 0; overflow: hidden; white-space: nowrap; }
.btab:not(.on)::after { content: ""; position: absolute; right: 0; top: 6px; bottom: 6px; width: 1px; background: #999; }
.btab:nth-child(3)::after { display: none; }
.btab.on { background: #f7f7f7; height: 33px; border-radius: 4px 4px 0 0; box-shadow: 0 0 3px #aaa; clip-path: inset(0 -3px 0 -3px); color: #333; }
.btab:nth-child(n+4) span { mask-image: linear-gradient(90deg, #000 88%, transparent); }
.newtab { width: 32px; display: grid; place-items: center; }
.bwin { margin-left: auto; display: flex; color: #888; }
.toolbar { height: 38px; display: flex; align-items: center; padding: 0 6px; background: #f7f7f7; }
.toolbar > button { width: 44px; height: 38px; display: grid; place-items: center; }
.address { flex: 1; height: 30px; margin: 0 6px; padding: 0 12px 0 15px; display: flex; align-items: center; gap: 16px; background: #fff; border-radius: 4px; box-shadow: 0 0 2px #ddd; font-size: 15px; color: #767676; }
.address b { font-weight: 400; color: #111; }
.address button { margin-left: auto; }
.bookmarks { height: 33px; padding: 0 14px 4px; display: flex; align-items: center; background: #f7f7f7; border-bottom: 1px solid #ccc; color: #222; }
.bookmarks a { width: 154px; display: flex; align-items: center; gap: 8px; white-space: nowrap; overflow: hidden; }
.bookmarks svg { width: 16px; height: 16px; }
.bookmarks .short { width: 78px; } .bookmarks .mid { width: 150px; }
.bookmarks .orange svg { color: #f48024; }

/* upload page */
.viewport { flex: 1; min-height: 0; display: flex; font-size: 13px; color: #24292e; }
.page { flex: 1; min-width: 0; overflow: hidden; padding: 19px 16px 0; }
.page > * { max-width: 1216px; margin-left: auto; margin-right: auto; }
.drop { height: 297px; border: 1px solid #e1e4e8; border-radius: 6px; display: flex; flex-direction: column; align-items: center; padding-top: 80px; }
.drop h2 { font-size: 23px; font-weight: 600; line-height: 32px; margin-top: 6px; }
.drop p { font-size: 17px; line-height: 24px; margin-top: 8px; color: #444d56; }
.drop a { color: #0366d6; }
.filebox { margin-top: 16px; height: 55px; border: 1px solid #e1e4e8; border-radius: 6px; display: flex; align-items: center; gap: 10px; padding: 0 20px 0 18px; }
.filebox button { margin-left: auto; }
.commit { margin-top: 20px; display: flex; gap: 16px; }
.cbody { flex: 1; min-width: 0; }
.cbox { position: relative; border: 1px solid #e1e4e8; border-radius: 6px; padding: 16px 16px 26px; }
.cbox::before { content: ""; position: absolute; left: -6px; top: 15px; width: 9px; height: 9px; background: #fff; border: solid #e1e4e8; border-width: 0 0 1px 1px; transform: rotate(45deg); }
.cbox h3 { font-size: 19px; font-weight: 600; line-height: 32px; margin-bottom: 8px; }
.cbox input, .cbox textarea { display: block; width: 100%; background: #fafbfc; border: 1px solid #e1e4e8; border-radius: 6px; padding: 5px 12px; box-shadow: inset 0 1px 2px #1b1f2313; }
.cbox input { height: 32px; margin-bottom: 10px; }
.cbox textarea { height: 100px; padding: 7px 12px; line-height: 24px; resize: vertical; }
.cbox ::placeholder { color: #6a737d; opacity: 1; }
.actions { display: flex; gap: 5px; margin-top: 8px; }
.actions button { height: 32px; padding: 0 16px; border-radius: 6px; border: 1px solid #dcdfe2; font-weight: 600; background: #fafbfc; color: #cb2431; box-shadow: 0 1px 0 #1b1f230a; }
.actions .primary { background: #2ea44f; border-color: #2a8f47; color: #fff; font-weight: 700; }
.page > .pagefoot { max-width: 1248px; margin-top: 40px; padding-top: 40px; border-top: 1px solid #e8eaed; color: #c6cbd1; display: flex; justify-content: center; }
.pscroll { width: 17px; background: #f1f1f1; display: grid; grid-template-rows: 8px 156fr 519fr 52fr 8px; justify-items: center; padding: 6px 0; }
.pup, .pdown { border: 4px solid transparent; align-self: center; }
.pup { border-bottom: 4px solid #555; border-top: 0; grid-row: 1; }
.pdown { border-top: 4px solid #555; border-bottom: 0; grid-row: 5; }
.pthumb { width: 15px; background: #c1c1c1; grid-row: 3; }
```
FILE: app.js
```js
const rows = `20140101 57.19 57.19 57.19 57.19 0 A -16.25 -28.41% 572978100
20140102 57.1 57.1 56.15 56.21 1916100 AA 15.48 48.54% 5161412000
20140103 56.39 57.35 56.26 56.92 1866600 AA-B 1.34 2.73% 21618200
20140106 57.4 57.7 56.56 56.64 1777400 AAC 10.92 54.60% 9789700
20140107 56.95 57.63 56.93 57.45 1463200 AAN 1.17 3.98% 237929300
20140108 57.33 58.54 57.17 58.39 2659400 AAP 48.6 43.91% 200376400
20140109 58.4 58.68 57.87 58.41 1757600 AAT 8.38 26.66% 40207800
20140110 58.51 59.01 58.14 58.93 1623300 AAV 0.45 10.37% 86658700
20140113 58.77 59.1 58.6 58.93 2946700 AB 4.49 21.04% 83051600
20140114 59.16 59.95 59.02 59.88 2562200 ABB -5.41 -20.37% 466820000
20140115 59.82 60.37 59.59 60.34 2335100 ABBV 12.63 23.92% 2303237600
20140116 60.24 60.5 60.04 60.5 1835900 ABC 19.85 28.23% 428969000
20140117 60.83 60.83 60.33 60.71 1699500 ABEV -1.13 -15.37% 3208014300
20140120 60.71 60.71 60.71 60.71 0 ABG 22.18 41.27% 81065600
20140121 60.69 60.88 59.86 60.85 3008400 ABM 0.06 0.21% 52403000
20140122 60.82 61.22 60.71 60.93 2769300 ABR 0.11 1.65% 28348400
20140123 60.48 60.51 59.4 59.47 3063500 ABR-A 0.77 3.18% 1798500
20140124 59.46 59.46 57.71 57.87 2656300 ABR-B 2.09 9.24% 1722000
20140127 57.9 58.37 56.98 58.3 4669000 ABR-C 0.94 3.86% 1758200
20140128 58.5 58.88 57.91 58.1 2536200 ABRN 0.49 2.04% 3451100
20140129 57.67 58.22 57.41 57.65 2163000 ABT 6.69 17.45% 1516024700
20140130 58.42 60.11 58.42 59.51 3743100 ABX -6.88 -39.02% 3085372400
20140131 58.61 59.15 58.05 58.15 3529000 ACC 9.15 28.41% 180543400
20140203 58.15 58.48 56.08 56.15 2929200 ACCO 2.29 34.08% 223248000
20140204 56.32 57.88 56.09 57.81 2911800 ACH 2.82 32.41% 34117500
20140205 57.58 57.7 56.96 57.43 2283800 ACM 0.94 3.19% 303393900
20140206 57.51 58.35 57.46 58.29 1609400 ACN 7.09 8.62% 705479100`.split("\n").map(r => r.split(" "));

const letters = [..."ABCDEFGHIJKLMNOP", ""];
const titles = ["<ticker>", "<date>", "<open>", "<high>", "<low>", "<close>", "<vol>", "", "Ticker", "YearlyChange", "PercentageChange", "TotalStockVolume", "", "", "", "", ""];
const grid = document.getElementById("grid");

function cell(tag, text, cls) {
  const el = document.createElement(tag);
  el.textContent = text;
  if (cls) el.className = cls;
  return el;
}

const head = grid.tHead.insertRow();
head.append(cell("th", ""), ...letters.map(l => cell("th", l, l === "K" ? "cur" : "")));

const body = grid.tBodies[0];
const first = body.insertRow();
first.className = "names";
first.append(cell("th", "1"), ...titles.map(t => cell("td", t)));

rows.forEach((r, i) => {
  const n = i + 2;
  const tr = body.insertRow();
  const values = ["A", ...r.slice(0, 6), "", ...r.slice(6), "", "", "", "", ""];
  tr.append(cell("th", n, n === 4 ? "cur" : ""));
  values.forEach((v, c) => {
    let cls = c === 0 || c === 8 ? "" : "num";
    if (c === 9) cls += v.startsWith("-") ? " loss" : " gain";
    if (c === 10 && n === 4) cls += " active";
    tr.append(cell("td", v, cls));
  });
});

const apps = [["edge", "run"], ["explorer", "run multi"], ["mail", ""], ["amazon", "", "a"], ["dropbox", ""], ["bolt", ""], ["code", "run"], ["slack", "run"], ["excel", "run focus"], ["chrome", "run"], ["zoom", "run multi"], ["cmd", "run"], ["note", "run"]];
document.querySelectorAll(".apps").forEach(bar => {
  bar.innerHTML = apps.map(([id, cls, letter]) => `<button class="app ${cls}" aria-label="${id}"><svg><use href="#t-${id}"/></svg>${letter ? `<span>${letter}</span>` : ""}</button>`).join("");
});
```
